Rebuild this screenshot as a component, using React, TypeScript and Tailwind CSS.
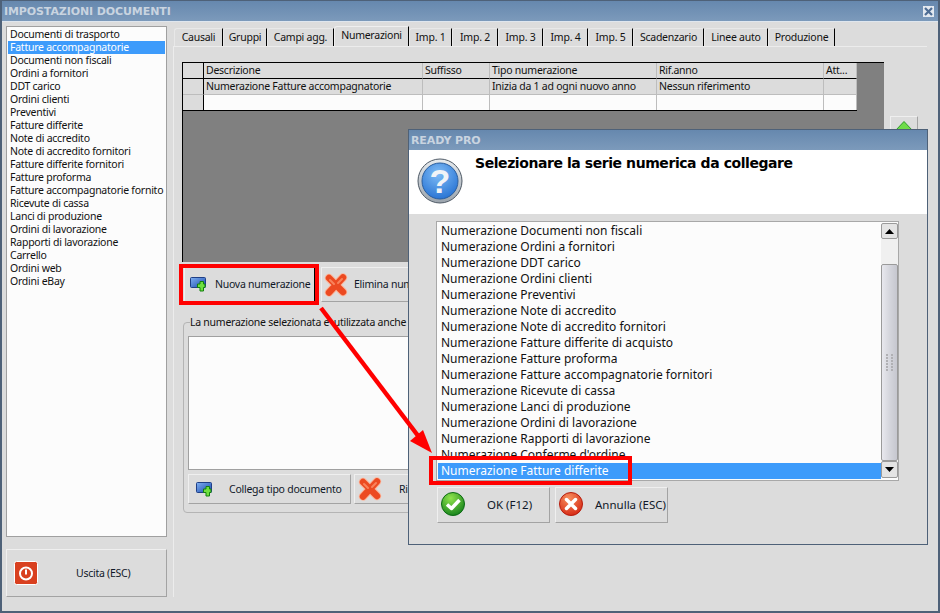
const documents = [
  'Documenti di trasporto',
  'Fatture accompagnatorie',
  'Documenti non fiscali',
  'Ordini a fornitori',
  'DDT carico',
  'Ordini clienti',
  'Preventivi',
  'Fatture differite',
  'Note di accredito',
  'Note di accredito fornitori',
  'Fatture differite fornitori',
  'Fatture proforma',
  'Fatture accompagnatorie fornito',
  'Ricevute di cassa',
  'Lanci di produzione',
  'Ordini di lavorazione',
  'Rapporti di lavorazione',
  'Carrello',
  'Ordini web',
  'Ordini eBay',
]

const tabs = [
  { name: 'Causali', width: 'w-[49px]' },
  { name: 'Gruppi', width: 'w-[44px]' },
  { name: 'Campi agg.', width: 'w-[67px]' },
  { name: 'Numerazioni', width: 'w-[75px]', active: true },
  { name: 'Imp. 1', width: 'w-[43px]' },
  { name: 'Imp. 2', width: 'w-[46px]' },
  { name: 'Imp. 3', width: 'w-[45px]' },
  { name: 'Imp. 4', width: 'w-[45px]' },
  { name: 'Imp. 5', width: 'w-[45px]' },
  { name: 'Scadenzario', width: 'w-[71px]' },
  { name: 'Linee auto', width: 'w-[64px]' },
  { name: 'Produzione', width: 'w-[67px]' },
]

const series = [
  'Numerazione Documenti non fiscali',
  'Numerazione Ordini a fornitori',
  'Numerazione DDT carico',
  'Numerazione Ordini clienti',
  'Numerazione Preventivi',
  'Numerazione Note di accredito',
  'Numerazione Note di accredito fornitori',
  'Numerazione Fatture differite di acquisto',
  'Numerazione Fatture proforma',
  'Numerazione Fatture accompagnatorie fornitori',
  'Numerazione Ricevute di cassa',
  'Numerazione Lanci di produzione',
  'Numerazione Ordini di lavorazione',
  'Numerazione Rapporti di lavorazione',
  "Numerazione Conferme d'ordine",
]

const buttonClass =
  'flex items-center bg-[#dcdcdc] border border-t-[#efefef] border-l-[#efefef] border-r-[#a3a3a3] border-b-[#a3a3a3] text-[#101828]'

const AddIcon = () => (
  <svg width="19" height="15" viewBox="0 0 19 15" className="shrink-0">
    <defs>
      <linearGradient id="addBlue" x1="0" y1="0" x2="1" y2="1">
        <stop offset="0" stopColor="#7fb0f2" />
        <stop offset="1" stopColor="#1a49ad" />
      </linearGradient>
    </defs>
    <rect x="0.5" y="0.5" width="15" height="10" rx="1" fill="url(#addBlue)" stroke="#1f3f86" />
    <path
      d="M11 5.500h2.500v-2.500h3.500v2.500h1.500v3.500H17v3.500h-3.500V9H11z"
      transform="translate(-3.500 1.500)"
      fill="#6fe03f"
      stroke="#12800f"
    />
  </svg>
)

const CrossIcon = () => (
  <svg width="24" height="24" viewBox="0 0 24 24" className="shrink-0">
    <path d="M5 5l14 14M19 4.500 5 19.500" stroke="#fbb59b" strokeWidth="8.500" strokeLinecap="round" />
    <path d="M5 5l14 14M19 4.500 5 19.500" stroke="#ec4a21" strokeWidth="6.500" strokeLinecap="round" />
    <path d="M6 7l4 4M18 6l-4 4" stroke="#f8835c" strokeWidth="2" strokeLinecap="round" />
  </svg>
)

const OkIcon = () => (
  <svg width="24" height="24" viewBox="0 0 24 24" className="shrink-0">
    <defs>
      <radialGradient id="okGreen" cx="0.4" cy="0.25" r="0.85">
        <stop offset="0" stopColor="#8fe44c" />
        <stop offset="1" stopColor="#0b7a18" />
      </radialGradient>
    </defs>
    <circle cx="12" cy="12" r="11.500" fill="url(#okGreen)" stroke="#0c6a14" />
    <path d="M6 12.500l4.500 4 8-8.500" fill="none" stroke="#ffffff" strokeWidth="3.500" strokeLinejoin="round" />
  </svg>
)

const CancelIcon = () => (
  <svg width="24" height="24" viewBox="0 0 24 24" className="shrink-0">
    <defs>
      <radialGradient id="cancelRed" cx="0.4" cy="0.25" r="0.85">
        <stop offset="0" stopColor="#f78f5e" />
        <stop offset="1" stopColor="#d3200e" />
      </radialGradient>
    </defs>
    <circle cx="12" cy="12" r="11.500" fill="url(#cancelRed)" stroke="#b51d0e" />
    <path d="M7.500 7.500l9 9M16.500 7.500l-9 9" stroke="#ffffff" strokeWidth="3.500" strokeLinecap="round" />
  </svg>
)

const PowerIcon = () => (
  <svg width="24" height="24" viewBox="0 0 24 24" className="shrink-0">
    <rect x="0.500" y="0.500" width="23" height="23" rx="2" fill="#d9401f" stroke="#ffffff" />
    <circle cx="12" cy="12.500" r="6" fill="none" stroke="#ffffff" strokeWidth="2" />
    <path d="M12 8.500v5" stroke="#ffffff" strokeWidth="2" />
  </svg>
)

const HelpIcon = () => (
  <svg width="46" height="46" viewBox="0 0 46 46" className="shrink-0">
    <defs>
      <radialGradient id="helpBlue" cx="0.45" cy="0.3" r="0.8">
        <stop offset="0" stopColor="#7fbcf6" />
        <stop offset="1" stopColor="#1e6bd0" />
      </radialGradient>
      <linearGradient id="helpRing" x1="0" y1="0" x2="0" y2="1">
        <stop offset="0" stopColor="#e8ecef" />
        <stop offset="1" stopColor="#9aa3ac" />
      </linearGradient>
    </defs>
    <circle cx="23" cy="23" r="22" fill="url(#helpRing)" stroke="#4f5a66" strokeWidth="1" />
    <circle cx="23" cy="23" r="18" fill="url(#helpBlue)" stroke="#2b5f9f" strokeWidth="1" />
    <text
      x="23"
      y="35"
      textAnchor="middle"
      fontFamily="Liberation Sans"
      fontWeight="700"
      fontSize="34"
      fill="#f2f4f7"
    >
      ?
    </text>
  </svg>
)

const Annotations = () => (
  <svg width="940" height="613" viewBox="0 0 940 613" className="absolute left-0 top-0 pointer-events-none">
    <path d="M319 307 420 440" stroke="#ff0000" strokeWidth="4.500" />
    <path d="M430 452 408 440 421 429z" fill="#ff0000" />
  </svg>
)

export default function App() {
  return (
    <div className="relative w-[940px] h-[613px] overflow-hidden flex flex-col bg-[#dcdcdc] border-x-2 border-b-2 border-t border-[#4e6178] font-['Noto_Sans',sans-serif] text-[10.5px] tracking-[-0.25px] leading-[13px] text-[#111]">
      {/* Title bar */}
      <div className="h-[20px] shrink-0 flex items-center justify-between pl-[2px] pr-[4px] bg-gradient-to-b from-[#6688ae] to-[#7c9abb]">
        <span className="font-['DejaVu_Sans',sans-serif] font-bold text-[11px] tracking-[-0.1px] text-[#c9d4e0]">
          IMPOSTAZIONI DOCUMENTI
        </span>
        <span className="w-[11px] h-[11px] flex items-center justify-center bg-[#e3e9f0]">
          <svg width="9" height="9" viewBox="0 0 9 9">
            <path d="M1 1l7 7M8 1L1 8" stroke="#4e6d94" strokeWidth="2.200" />
          </svg>
        </span>
      </div>

      <div className="flex-1 flex pl-[4px] pt-[4px] border-t border-[#dfe6ee]">
        {/* Left column */}
        <div className="w-[161px] shrink-0 flex flex-col">
          <div className="h-[511px] bg-[#fcfcfc] border border-[#a0a0a0] pt-[1px] px-[1px]">
            {documents.map((doc, i) => (
              <div
                key={doc}
                className={`h-[13px] pl-[2px] whitespace-nowrap overflow-hidden ${i === 1 ? 'bg-[#3d9bfb] text-white' : ''}`}
              >
                {doc}
              </div>
            ))}
          </div>
          <div className={`${buttonClass} mt-[12px] h-[48px] pl-[7px]`}>
            <PowerIcon />
            <span className="ml-[38px]">Uscita (ESC)</span>
          </div>
        </div>

        {/* Right column */}
        <div className="ml-[6px] w-[754px] flex flex-col">
          <div className="h-[20px] flex items-end pl-[1px]">
            {tabs.map((tab) => (
              <div
                key={tab.name}
                className={`flex items-center justify-center border-r border-r-black rounded-tl-[3px] ${tab.width} ${
                  tab.active
                    ? 'h-[20px] pb-[3px] border-t border-t-[#efefef] border-l border-l-[#efefef]'
                    : 'h-[18px] border-t border-t-[#e8e8e8] border-l border-l-[#e8e8e8]'
                }`}
              >
                {tab.name}
              </div>
            ))}
          </div>

          <div className="w-[754px] h-[551px] pl-[8px] pt-[15px] border-t border-l border-[#ececec] border-r-black border-b-black flex flex-col">
            <div className="flex items-start">
              {/* Grid */}
              <div className="w-[702px] h-[200px] bg-[#808080] border-t border-l border-black">
                <div className="w-[674px] grid grid-cols-[21px_219px_67px_167px_167px_33px] bg-[#dcdcdc] border-r border-b border-black">
                  {['', 'Descrizione', 'Suffisso', 'Tipo numerazione', 'Rif.anno', 'Att...'].map((h, i) => (
                    <div
                      key={h || 'corner'}
                      className={`h-[16px] pl-[2px] flex items-center border-b border-black border-r ${i === 0 ? 'border-r-black' : 'border-r-[#bdbdbd]'}`}
                    >
                      {h}
                    </div>
                  ))}
                  {['', 'Numerazione Fatture accompagnatorie', '', 'Inizia da 1 ad ogni nuovo anno', 'Nessun riferimento', ''].map((c, i) => (
                    <div
                      key={i}
                      className={`h-[16px] pl-[2px] flex items-center whitespace-nowrap border-r border-b border-b-[#bdbdbd] ${i === 0 ? 'border-r-black' : 'border-r-[#bdbdbd]'}`}
                    >
                      {c}
                    </div>
                  ))}
                  {[0, 1, 2, 3, 4, 5].map((i) => (
                    <div
                      key={i}
                      className={`h-[15px] border-r ${i === 0 ? 'bg-[#dcdcdc] border-r-black' : 'bg-[#fcfcfc] border-r-[#bdbdbd]'}`}
                    />
                  ))}
                </div>
              </div>
              <div className={`${buttonClass} ml-[6px] mt-[54px] w-[28px] h-[34px] justify-center items-start pt-[4px]`}>
                <svg width="18" height="10" viewBox="0 0 18 10">
                  <path d="M9 0.500 17.500 9.500H0.500z" fill="#6fdc4a" stroke="#2f9c2a" />
                </svg>
              </div>
            </div>

            {/* Buttons below the grid */}
            <div className="flex mt-[5px]">
              <div className={`${buttonClass} w-[131px] h-[35px] ml-[2px] border-r-black border-b-black pl-[5px]`}>
                <AddIcon />
                <span className="ml-[6px] whitespace-nowrap">Nuova numerazione</span>
              </div>
              <div className={`${buttonClass} w-[130px] h-[35px] ml-[6px] pl-[2px] overflow-hidden`}>
                <CrossIcon />
                <span className="ml-[6px] whitespace-nowrap">Elimina numerazione</span>
              </div>
            </div>

            <fieldset className="mt-[14px] ml-[1px] w-[730px] h-[197px] border border-[#b4b4b4] rounded-[4px] pl-[4px] pr-[5px]">
              <legend className="ml-[2px] whitespace-nowrap">La numerazione selezionata e' utilizzata anche da:</legend>
              <div className="h-[134px] mt-[7px] bg-[#fcfcfc] border border-[#a0a0a0]" />
              <div className="flex mt-[4px]">
                <div className={`${buttonClass} w-[163px] h-[30px] pl-[7px]`}>
                  <AddIcon />
                  <span className="ml-[14px] whitespace-nowrap">Collega tipo documento</span>
                </div>
                <div className={`${buttonClass} w-[160px] h-[30px] ml-[3px] pl-[3px]`}>
                  <CrossIcon />
                  <span className="ml-[17px] whitespace-nowrap">Rimuovi</span>
                </div>
              </div>
            </fieldset>
          </div>
        </div>
      </div>

      {/* Dialog */}
      <div className="absolute left-[406px] top-[128px] w-[520px] h-[416px] flex flex-col bg-[#dcdcdc] border border-[#4e6178] tracking-normal">
        <div className="h-[20px] shrink-0 flex items-center pl-[2px] bg-gradient-to-b from-[#6688ae] to-[#7c9abb]">
          <span className="font-['DejaVu_Sans',sans-serif] font-bold text-[11px] tracking-[-0.1px] text-[#c9d4e0]">READY PRO</span>
        </div>
        <div className="h-[64px] shrink-0 flex bg-white pl-[8px] pt-[8px]">
          <HelpIcon />
          <span className="ml-[12px] -mt-[3px] font-['DejaVu_Sans',sans-serif] font-bold text-[14px] leading-[16px] tracking-[-0.43px] text-black">
            Selezionare la serie numerica da collegare
          </span>
        </div>
        <div className="mt-[7px] ml-[27px] w-[463px] h-[260px] flex bg-[#fcfcfc] border border-[#a8a8a8]">
          <div className="w-[444px] pt-[1px] pl-[1px] text-[12px]">
            {series.map((s) => (
              <div key={s} className="h-[16px] pl-[3px] leading-[16px] whitespace-nowrap">
                {s}
              </div>
            ))}
            <div className="h-[16px] pl-[3px] leading-[16px] bg-[#3d9bfb] text-white whitespace-nowrap">
              Numerazione Fatture differite
            </div>
          </div>
          <div className="w-[17px] pt-[1px] flex flex-col">
            <div className="h-[16px] flex items-center justify-center bg-[#e4e4e4] border border-[#9a9a9a] rounded-[2px]">
              <svg width="9" height="5" viewBox="0 0 9 5"><path d="M4.500 0 9 5H0z" fill="#000" /></svg>
            </div>
            <div className="h-[25px] bg-[#f0f0f0]" />
            <div className="h-[197px] flex items-center justify-center bg-gradient-to-r from-[#e8e8ee] via-[#d5d6dd] to-[#c6c7cf] border border-[#9a9a9a] rounded-[2px]">
              <div className="grid grid-cols-3 gap-[1px] w-[7px]">
                {Array.from({ length: 18 }).map((_, i) => (
                  <div key={i} className={`w-[2px] h-[2px] ${i % 3 === 1 ? 'bg-transparent' : 'bg-[#b0b0b4]'}`} />
                ))}
              </div>
            </div>
            <div className="h-[17px] flex items-center justify-center bg-[#e4e4e4] border border-[#9a9a9a] rounded-[2px]">
              <svg width="9" height="5" viewBox="0 0 9 5"><path d="M0 0h9L4.500 5z" fill="#000" /></svg>
            </div>
          </div>
        </div>
        <div className="flex mt-[6px] ml-[28px]">
          <div className={`${buttonClass} w-[113px] h-[36px] pl-[3px] pb-[2px]`}>
            <OkIcon />
            <span className="ml-[22px] text-[11.5px]">OK (F12)</span>
          </div>
          <div className={`${buttonClass} w-[113px] h-[36px] ml-[5px] pl-[3px] pb-[2px]`}>
            <CancelIcon />
            <span className="ml-[12px] text-[11.5px]">Annulla (ESC)</span>
          </div>
        </div>
      </div>

      {/* Red highlights drawn over the screenshot */}
      <div className="absolute left-[177px] top-[263px] w-[140px] h-[41px] border-[4px] border-[#ff0000]" />
      <div className="absolute left-[427px] top-[455px] w-[203px] h-[29px] border-[4px] border-[#ff0000]" />
      <Annotations />
    </div>
  )
}
